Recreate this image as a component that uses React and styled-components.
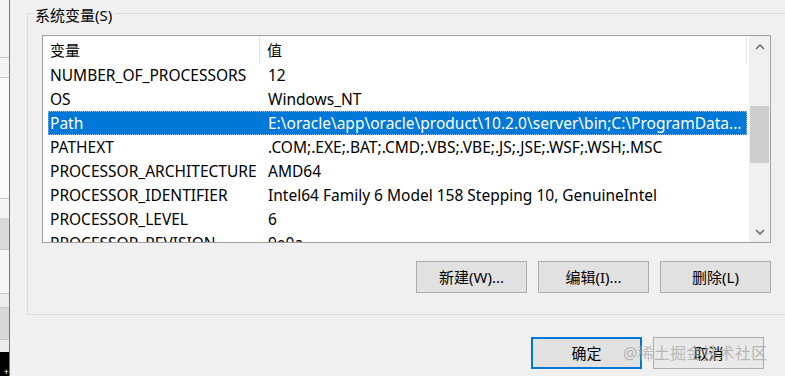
import styled, { createGlobalStyle } from 'styled-components';

const GlobalStyle = createGlobalStyle`
    html, body {
        margin: 0;
        padding: 0;
        background: #f0f0f0;
    }
    body {
        font-family: 'Noto Sans', 'Noto Sans CJK SC', sans-serif;
        font-size: 15.5px;
        color: #000;
    }
`;

const Page = styled.div`
    display: flex;
    width: 785px;
    height: 376px;
    overflow: hidden;
    position: relative;
`;

const Strip = styled.div`
    width: 9px;
    flex-shrink: 0;
    border-right: 1px solid #767676;
    display: flex;
    flex-direction: column;
`;

const StripCell = styled.div`
    height: ${(p) => p.h}px;
    background: ${(p) => p.bg};
    border-bottom: ${(p) => (p.line ? '1px solid #c8c8c8' : 'none')};
    box-sizing: border-box;
    flex-shrink: 0;
`;

const StripTail = styled.div`
    flex: 1;
    background: #000;
    position: relative;
`;

const Cross = styled.span`
    position: absolute;
    right: 0;
    bottom: 0;
    color: #fff;
    font-size: 9px;
    line-height: 9px;
`;

const Main = styled.div`
    flex: 1;
    padding: 13px 0 0 17px;
    display: flex;
    flex-direction: column;
`;

const GroupBox = styled.div`
    border: 1px solid #dcdcdc;
    border-right: none;
    height: 302px;
    box-sizing: border-box;
    padding: 0 0 0 14px;
    display: flex;
    flex-direction: column;
`;

const Legend = styled.div`
    align-self: flex-start;
    margin: -9px 0 0 -9px;
    padding: 0 2px;
    background: #f0f0f0;
    font-size: 15px;
    line-height: 20px;
    height: 20px;
`;

const List = styled.div`
    margin-top: 10px;
    width: 729px;
    height: 208px;
    box-sizing: border-box;
    border: 1px solid #a0a0a0;
    background: #fff;
    display: flex;
    overflow: hidden;
`;

const ListBody = styled.div`
    flex: 1;
    display: flex;
    flex-direction: column;
    overflow: hidden;
`;

const Header = styled.div`
    display: flex;
    height: 27px;
    flex-shrink: 0;
    align-items: center;
`;

const HeaderCell = styled.div`
    width: ${(p) => p.w}px;
    height: 100%;
    box-sizing: border-box;
    padding-left: 7px;
    display: flex;
    align-items: center;
    border-right: 1px solid #e5e5e5;
    flex-shrink: 0;
    font-size: 15px;
`;

const Row = styled.div`
    display: flex;
    height: 24px;
    flex-shrink: 0;
    align-items: center;
    margin: 0 2px 0 5px;
    box-sizing: border-box;
    border: 1px ${(p) => (p.selected ? 'dotted #8fbde8' : 'solid transparent')};
    background: ${(p) => (p.selected ? '#0078d7' : 'transparent')};
    color: ${(p) => (p.selected ? '#fff' : '#000')};
    white-space: nowrap;
`;

const NameCell = styled.div`
    width: 211px;
    padding-left: 1px;
    flex-shrink: 0;
    overflow: hidden;
`;

const ValueCell = styled.div`
    flex: 1;
    padding-left: 7px;
    overflow: hidden;
`;

const ScrollBar = styled.div`
    width: 21px;
    flex-shrink: 0;
    background: #f0f0f0;
    display: flex;
    flex-direction: column;
`;

const ScrollArrow = styled.div`
    height: 21px;
    display: flex;
    align-items: center;
    justify-content: center;
    flex-shrink: 0;
`;

const Track = styled.div`
    flex: 1;
    display: flex;
    flex-direction: column;
`;

const Thumb = styled.div`
    margin: ${(p) => p.offset}px 1px 0 1px;
    height: 57px;
    background: #cdcdcd;
`;

const ButtonRow = styled.div`
    display: flex;
    gap: 11px;
    margin: 18px 0 0 374px;
`;

const Button = styled.button`
    width: 111px;
    height: 32px;
    box-sizing: border-box;
    font-family: inherit;
    font-size: 15px;
    color: #000;
    background: ${(p) => (p.faded ? '#e9e9e9' : '#e1e1e1')};
    border: ${(p) => (p.primary ? '2px solid #0078d7' : '1px solid #adadad')};
    padding: 0;
    line-height: 1;
`;

const Footer = styled.div`
    display: flex;
    gap: 11px;
    margin: 22px 0 0 504px;
`;

const Watermark = styled.div`
    position: absolute;
    left: 623px;
    top: 341px;
    font-size: 16px;
    line-height: 24px;
    color: rgba(160, 160, 160, 0.7);
    letter-spacing: 0.2px;
    white-space: nowrap;
`;

const Chevron = ({ down }) => (
    <svg width='10' height='6' viewBox='0 0 10 6'>
        <path
            d={down ? 'M1 1 L5 5 L9 1' : 'M1 5 L5 1 L9 5'}
            fill='none'
            stroke='#606060'
            strokeWidth='1.4'
        />
    </svg>
);

const stripCells = [
    { h: 58, bg: '#f4f4f4', line: true },
    { h: 20, bg: '#f4f4f4', line: true },
    { h: 121, bg: '#f9f9f9', line: true },
    { h: 19, bg: '#f4f4f4' },
    { h: 32, bg: '#dadada', line: true },
    { h: 44, bg: '#f6f6f6', line: true },
    { h: 14, bg: '#ececec', line: true },
    { h: 32, bg: '#d9d9d9', line: true },
    { h: 12, bg: '#ececec' },
];

const rows = [
    ['NUMBER_OF_PROCESSORS', '12'],
    ['OS', 'Windows_NT'],
    ['Path', 'E:\\oracle\\app\\oracle\\product\\10.2.0\\server\\bin;C:\\ProgramData...'],
    ['PATHEXT', '.COM;.EXE;.BAT;.CMD;.VBS;.VBE;.JS;.JSE;.WSF;.WSH;.MSC'],
    ['PROCESSOR_ARCHITECTURE', 'AMD64'],
    ['PROCESSOR_IDENTIFIER', 'Intel64 Family 6 Model 158 Stepping 10, GenuineIntel'],
    ['PROCESSOR_LEVEL', '6'],
    ['PROCESSOR_REVISION', '9e0a'],
];

const App = () => {
    return (
        <Page>
            <GlobalStyle />
            <Strip>
                {stripCells.map((c, i) => (
                    <StripCell key={i} h={c.h} bg={c.bg} line={c.line} />
                ))}
                <StripTail>
                    <Cross>+</Cross>
                </StripTail>
            </Strip>
            <Main>
                <GroupBox>
                    <Legend>系统变量(S)</Legend>
                    <List>
                        <ListBody>
                            <Header>
                                <HeaderCell w={217}>变量</HeaderCell>
                                <HeaderCell w={487}>值</HeaderCell>
                            </Header>
                            {rows.map(([name, value]) => (
                                <Row key={name} selected={name === 'Path'}>
                                    <NameCell>{name}</NameCell>
                                    <ValueCell>{value}</ValueCell>
                                </Row>
                            ))}
                        </ListBody>
                        <ScrollBar>
                            <ScrollArrow>
                                <Chevron />
                            </ScrollArrow>
                            <Track>
                                <Thumb offset={49} />
                            </Track>
                            <ScrollArrow>
                                <Chevron down />
                            </ScrollArrow>
                        </ScrollBar>
                    </List>
                    <ButtonRow>
                        <Button>新建(W)...</Button>
                        <Button>编辑(I)...</Button>
                        <Button>删除(L)</Button>
                    </ButtonRow>
                </GroupBox>
                <Footer>
                    <Button primary>确定</Button>
                    <Button faded>取消</Button>
                </Footer>
            </Main>
            <Watermark>@稀土掘金技术社区</Watermark>
        </Page>
    );
};

export default App;
